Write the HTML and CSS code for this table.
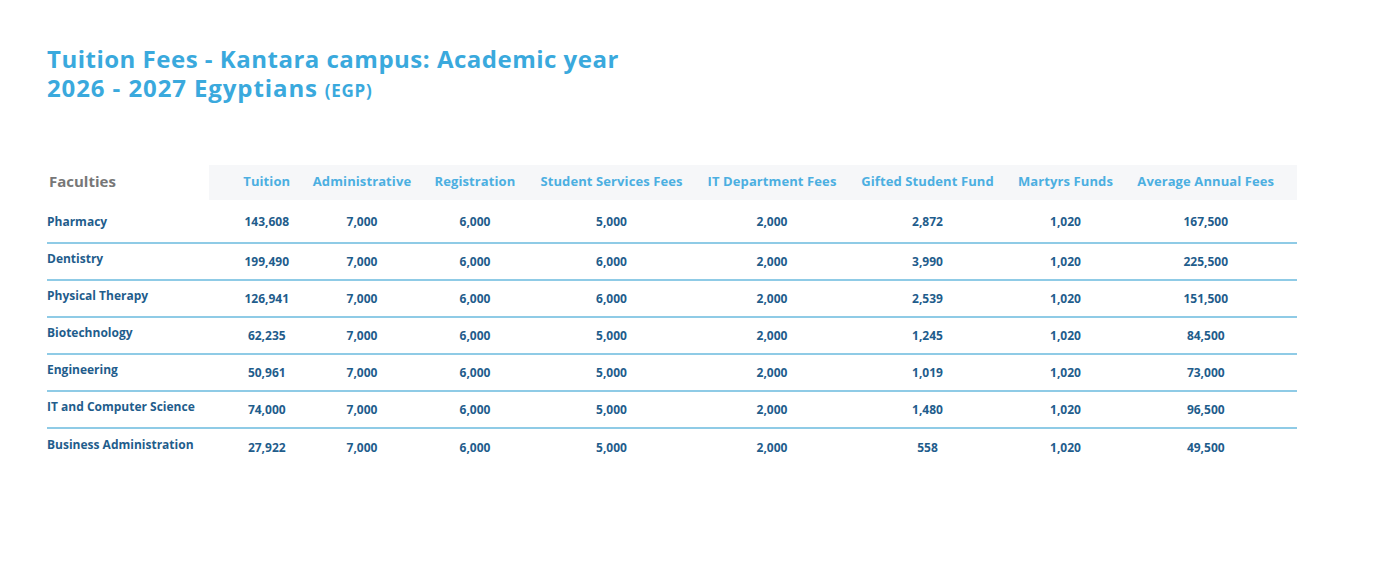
FILE: index.html
```html
<!DOCTYPE html>
<html lang="en">
<head>
<meta charset="utf-8">
<title>Tuition Fees - Kantara campus</title>
<link rel="stylesheet" href="styles.css">
</head>
<body>
<main class="page">
  <h1 class="title"><span class="line1">Tuition Fees - Kantara campus: Academic year</span><br><span class="line2">2026 - 2027 Egyptians</span> <span class="currency">(EGP)</span></h1>
  <table class="fees">
    <colgroup>
      <col class="c-name"><col class="c-tuition"><col class="c-admin"><col class="c-reg"><col class="c-services"><col class="c-it"><col class="c-gifted"><col class="c-martyrs"><col class="c-avg">
    </colgroup>
    <thead>
      <tr>
        <th class="faculties">Faculties</th>
        <th class="first">Tuition</th>
        <th>Administrative</th>
        <th>Registration</th>
        <th>Student Services Fees</th>
        <th>IT Department Fees</th>
        <th>Gifted Student Fund</th>
        <th>Martyrs Funds</th>
        <th class="last">Average Annual Fees</th>
      </tr>
    </thead>
    <tbody>
      <tr><td class="name">Pharmacy</td><td class="first">143,608</td><td>7,000</td><td>6,000</td><td>5,000</td><td>2,000</td><td>2,872</td><td>1,020</td><td class="last">167,500</td></tr>
      <tr><td class="name">Dentistry</td><td class="first">199,490</td><td>7,000</td><td>6,000</td><td>6,000</td><td>2,000</td><td>3,990</td><td>1,020</td><td class="last">225,500</td></tr>
      <tr><td class="name">Physical Therapy</td><td class="first">126,941</td><td>7,000</td><td>6,000</td><td>6,000</td><td>2,000</td><td>2,539</td><td>1,020</td><td class="last">151,500</td></tr>
      <tr><td class="name">Biotechnology</td><td class="first">62,235</td><td>7,000</td><td>6,000</td><td>5,000</td><td>2,000</td><td>1,245</td><td>1,020</td><td class="last">84,500</td></tr>
      <tr><td class="name">Engineering</td><td class="first">50,961</td><td>7,000</td><td>6,000</td><td>5,000</td><td>2,000</td><td>1,019</td><td>1,020</td><td class="last">73,000</td></tr>
      <tr><td class="name">IT and Computer Science</td><td class="first">74,000</td><td>7,000</td><td>6,000</td><td>5,000</td><td>2,000</td><td>1,480</td><td>1,020</td><td class="last">96,500</td></tr>
      <tr><td class="name">Business Administration</td><td class="first">27,922</td><td>7,000</td><td>6,000</td><td>5,000</td><td>2,000</td><td>558</td><td>1,020</td><td class="last">49,500</td></tr>
    </tbody>
  </table>
</main>
</body>
</html>
```

FILE: styles.css
```css
* { box-sizing: border-box; }
html, body { margin: 0; padding: 0; background: #ffffff; }
body { font-family: "Open Sans", "DejaVu Sans", sans-serif; }

.page { padding: 45px 0 0 47px; }

.title {
  margin: 0;
  font-size: 24px;
  line-height: 28.5px;
  font-weight: 700;
  letter-spacing: 0.5px;
  color: #3aa9dd;
}
.line2 { letter-spacing: 0.9px; }
.currency { font-size: 17px; letter-spacing: 0.8px; }

.fees {
  margin-top: 60px;
  width: 1250px;
  border-collapse: collapse;
  table-layout: fixed;
}
.c-name { width: 162px; }
.c-tuition { width: 92.5px; }
.c-admin { width: 121px; }
.c-reg { width: 105px; }
.c-services { width: 168px; }
.c-it { width: 153px; }
.c-gifted { width: 158px; }
.c-martyrs { width: 118px; }
.c-avg { width: 172.5px; }

.fees th {
  height: 35px;
  padding: 0 0 4px;
  background: #f6f7f9;
  color: #4cafe1;
  font-size: 13px;
  font-weight: 700;
  letter-spacing: 0.1px;
  text-align: center;
  vertical-align: middle;
  white-space: nowrap;
}
.fees th.faculties {
  background: transparent;
  color: #777777;
  font-size: 15px;
  letter-spacing: 0;
  text-align: left;
  padding-left: 2px;
}
.fees .first { padding-left: 23px; }
.fees .last { padding-right: 10px; }

.fees td {
  height: 37.1px;
  padding: 0;
  color: #1f5d8c;
  font-size: 12px;
  font-weight: 700;
  text-align: center;
  vertical-align: middle;
  white-space: nowrap;
}
.fees tbody tr:first-child td { height: 42.5px; padding-top: 2px; }
.fees tbody tr { border-bottom: 2px solid #8fcbe6; }
.fees tbody tr:last-child { border-bottom: none; }
.fees td.name { text-align: left; }
.fees tbody tr + tr td.name { padding-bottom: 5px; }
```
